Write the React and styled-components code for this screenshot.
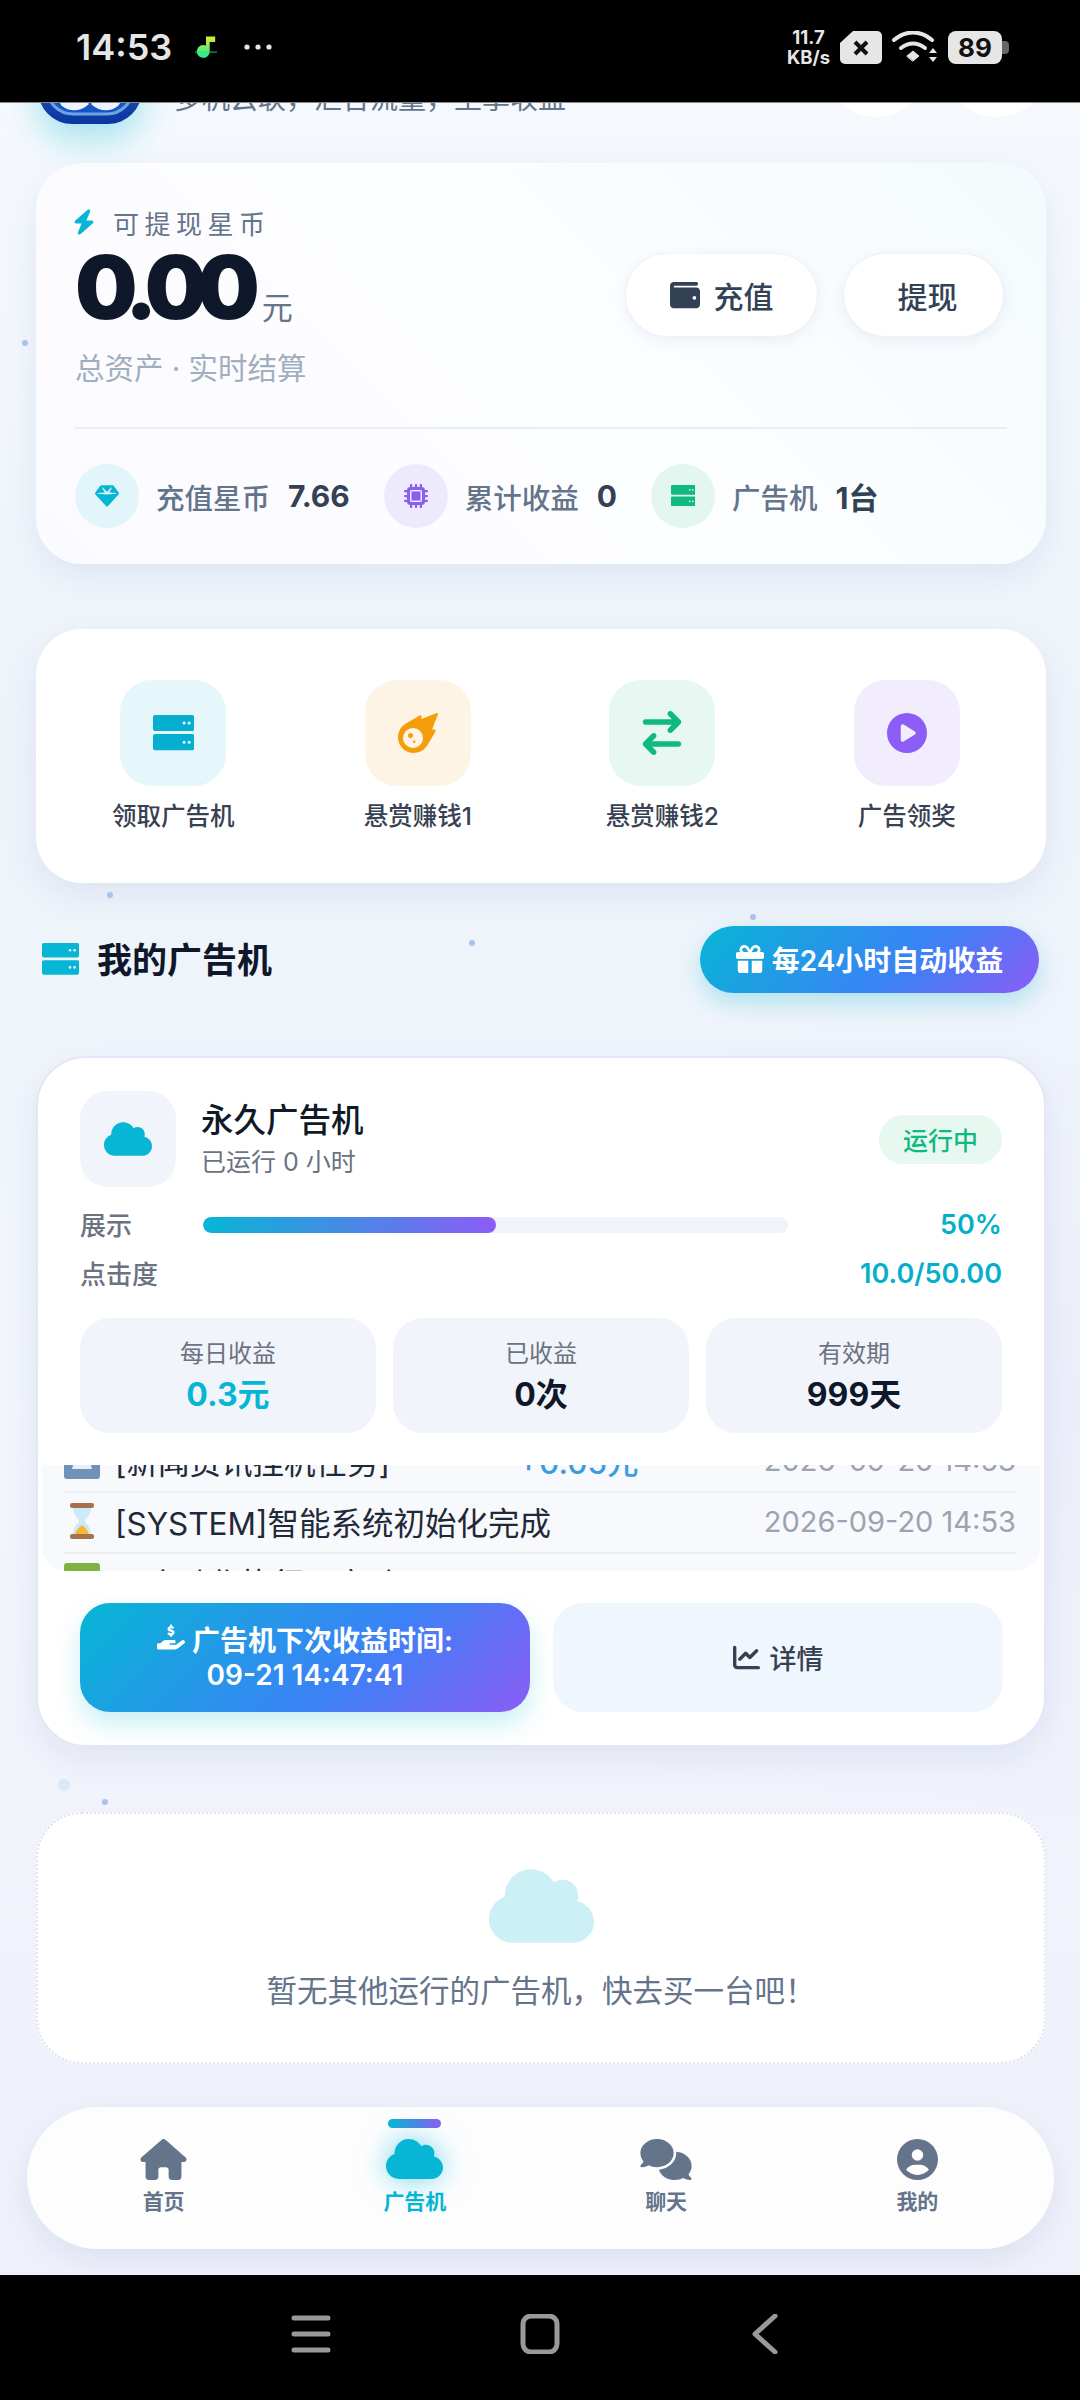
import React from 'react'
import styled, { createGlobalStyle } from 'styled-components'
import { FaCloud } from 'react-icons/fa'
import {
  FaMeteor, FaArrowRightArrowLeft, FaCirclePlay, FaBolt, FaWallet, FaGem,
  FaMicrochip, FaGift, FaHandHoldingDollar, FaChartLine, FaHouse, FaComments, FaCircleUser
} from 'react-icons/fa6'

const GRADIENT = 'linear-gradient(135deg, #06b6d4, #3b82f6 60%, #8b5cf6)'

const Global = createGlobalStyle`
  html, body { margin: 0; padding: 0; background: #000; }
  * { box-sizing: border-box; }
  body { font-family: Inter, "Noto Sans CJK SC", sans-serif; }
`

const Phone = styled.div`
  width: 1080px;
  height: 2400px;
  display: flex;
  flex-direction: column;
  background: #000;
  overflow: hidden;
`

const StatusBar = styled.div`
  height: 103px;
  flex: none;
  display: flex;
  align-items: center;
  justify-content: space-between;
  padding: 0 78px 8px 76px;
  color: #e6e6e6;
  border-bottom: 1px solid #8a8a8a;
`

const StatusGroup = styled.div`
  display: flex;
  align-items: center;
  gap: ${p => p.$gap || 10}px;
`

const Clock = styled.span`
  font-size: 36px;
  font-weight: 600;
  margin-right: -4px;
`

const Speed = styled.div`
  display: flex;
  flex-direction: column;
  align-items: center;
  font-size: 18.5px;
  font-weight: 700;
  line-height: 20px;
`

const Battery = styled.div`
  width: 54px;
  height: 33px;
  border-radius: 8px;
  background: #e6e6e6;
  color: #111;
  font-size: 26px;
  font-weight: 700;
  display: flex;
  align-items: center;
  justify-content: center;
  position: relative;
  &::after {
    content: '';
    position: absolute;
    right: -7px;
    top: 10px;
    width: 7px;
    height: 13px;
    border-radius: 0 4px 4px 0;
    background: #666;
  }
`

const Screen = styled.main`
  position: relative;
  height: 2172px;
  flex: none;
  overflow: hidden;
  padding: 0 34px 0 36px;
  background:
    radial-gradient(900px 700px at 100% 60%, #eceffa 0%, transparent 70%),
    linear-gradient(180deg, #f5f9fd 0%, #eef3fa 30%, #f2f5fc 60%, #eff1fa 100%);
`

const Dot = styled.i`
  position: absolute;
  left: ${p => p.$x}px;
  top: ${p => p.$y}px;
  width: ${p => p.$size || 6}px;
  height: ${p => p.$size || 6}px;
  border-radius: 50%;
  background: ${p => p.$size ? '#dbe7fb' : '#a9c2ec'};
`

const Header = styled.header`
  height: 60px;
  margin-top: -39px;
  display: flex;
  align-items: flex-end;
  position: relative;
`

const Logo = styled.svg`
  width: 104px;
  height: 96px;
  margin-left: 2px;
  flex: none;
  border-radius: 34px;
  box-shadow: 0 16px 34px rgba(6, 182, 212, .32);
`

const Slogan = styled.div`
  margin: 0 0 11px 32px;
  font-size: 28px;
  line-height: 28px;
  color: #64748b;
  white-space: nowrap;
`

const Round = styled.div`
  position: absolute;
  bottom: 7px;
  right: ${p => p.$right}px;
  width: 110px;
  height: 110px;
  border-radius: 50%;
  background: #fff;
`

const Card = styled.section`
  width: 1010px;
  background: #fff;
  border-radius: 46px;
  box-shadow: 0 12px 32px rgba(120, 140, 190, .14);
`

const Hero = styled(Card)`
  height: 401px;
  margin-top: 39px;
  padding: 44px 39px 0;
  background: linear-gradient(45deg, #fbfaff 0%, #fdfeff 50%, #f4fafd 100%);
`

const HeroTop = styled.div`
  height: 222px;
  display: flex;
  justify-content: space-between;
  border-bottom: 2px solid #e9edf4;
`

const Eyebrow = styled.div`
  display: flex;
  align-items: center;
  gap: 18px;
  height: 30px;
  font-size: 26px;
  letter-spacing: 5.5px;
  color: #64748b;
  svg { color: #06b6d4; width: 22px; height: 28px; margin-left: -2px; }
`

const AmountRow = styled.div`
  display: flex;
  align-items: baseline;
  gap: 12px;
  margin-top: 4px;
  height: 92px;
  line-height: 92px;
`

const Amount = styled.span`
  font-size: 88px;
  font-weight: 900;
  color: #0f172a;
  letter-spacing: -10px;
`

const Unit = styled.span`
  font-size: 31px;
  color: #64748b;
`

const HeroSub = styled.div`
  margin-top: 15px;
  font-size: 29.5px;
  line-height: 40px;
  color: #a0aec0;
`

const HeroActions = styled.div`
  display: flex;
  gap: 25px;
  margin: 46px 3px 0 0;
  align-items: flex-start;
`

const PillButton = styled.div`
  width: ${p => p.$w}px;
  height: 84px;
  padding-left: ${p => p.$inset || 0}px;
  border-radius: 42px;
  background: #fff;
  border: 1px solid #eef1f6;
  box-shadow: 0 4px 14px rgba(120, 140, 190, .12);
  display: flex;
  align-items: center;
  justify-content: center;
  gap: 14px;
  font-size: 30px;
  font-weight: 500;
  color: #334155;
`

const HeroStats = styled.div`
  display: flex;
  align-items: center;
  margin-top: 35px;
  gap: 34px;
`

const Stat = styled.div`
  display: flex;
  align-items: center;
  font-size: 28.5px;
`

const StatIcon = styled.div`
  width: 64px;
  height: 64px;
  border-radius: 50%;
  background: ${p => p.$bg};
  color: ${p => p.$color};
  display: flex;
  align-items: center;
  justify-content: center;
  margin-right: 17px;
  font-size: 24px;
`

const StatLabel = styled.span`
  color: #64748b;
  font-weight: 500;
  margin-right: 18px;
`

const StatValue = styled.span`
  color: #334155;
  font-size: 30px;
  font-weight: 700;
`

const Actions = styled(Card)`
  height: 254px;
  margin-top: 65px;
  padding: 51px 17px 0 15px;
  display: grid;
  grid-template-columns: repeat(4, 1fr);
`

const ActionItem = styled.div`
  display: flex;
  flex-direction: column;
  align-items: center;
  font-size: 24.5px;
  font-weight: 500;
  color: #374151;
`

const ActionTile = styled.div`
  width: 106px;
  height: 106px;
  border-radius: 32px;
  background: ${p => p.$bg};
  color: ${p => p.$color};
  display: flex;
  align-items: center;
  justify-content: center;
  font-size: ${p => p.$size || 40}px;
  margin-bottom: 11px;
`

const SectionHead = styled.div`
  width: 1003px;
  margin-top: 43px;
  height: 66px;
  display: flex;
  align-items: center;
  justify-content: space-between;
  padding-left: 6px;
`

const SectionTitle = styled.h2`
  margin: 0 0 3px;
  display: flex;
  align-items: center;
  gap: 18px;
  font-size: 35px;
  font-weight: 700;
  color: #0f172a;
  svg { color: #06b6d4; font-size: 36px; margin-top: 3px; }
`

const AutoPill = styled.div`
  width: 339px;
  height: 67px;
  border-radius: 34px;
  background: ${GRADIENT};
  box-shadow: 0 10px 24px rgba(6, 182, 212, .28);
  color: #fff;
  font-size: 28px;
  font-weight: 600;
  display: flex;
  align-items: center;
  justify-content: center;
  gap: 8px;
`

const Machine = styled(Card)`
  height: 691px;
  margin-top: 64px;
  padding: 33px 42px 0;
  border: 2px solid #e5e6f6;
  border-radius: 50px;
  position: relative;
`

const MachineHead = styled.div`
  display: flex;
  align-items: center;
  height: 96px;
`

const MachineIcon = styled.div`
  width: 96px;
  height: 96px;
  border-radius: 28px;
  background: #f1f4fb;
  color: #06b6d4;
  font-size: 48px;
  display: flex;
  align-items: center;
  justify-content: center;
  margin-right: 25px;
`

const MachineName = styled.div`
  font-size: 32.5px;
  font-weight: 500;
  line-height: 42px;
  color: #111827;
`

const MachineSub = styled.div`
  font-size: 25px;
  line-height: 34px;
  margin-top: 3px;
  color: #6b7280;
`

const Badge = styled.div`
  margin-left: auto;
  width: 123px;
  height: 49px;
  border-radius: 25px;
  background: #e7f8f1;
  color: #10b981;
  font-size: 25px;
  font-weight: 500;
  display: flex;
  align-items: center;
  justify-content: center;
`

const Meters = styled.div`
  margin-top: 13px;
`

const MeterRow = styled.div`
  height: 49px;
  display: flex;
  align-items: center;
  font-size: 26px;
  color: #6b7280;
  font-weight: 500;
`

const MeterLabel = styled.span`
  width: 123px;
  flex: none;
  margin-top: -3px;
`

const Track = styled.div`
  width: 585px;
  height: 16px;
  border-radius: 8px;
  background: #f1f3fa;
  overflow: hidden;
`

const TrackFill = styled.div`
  height: 100%;
  border-radius: 8px;
  background: linear-gradient(90deg, #06b6d4, #8b5cf6);
`

const MeterValue = styled.span`
  margin-left: auto;
  font-size: 27px;
  font-weight: 600;
  color: #06afc9;
`

const StatGrid = styled.div`
  display: grid;
  grid-template-columns: repeat(3, 1fr);
  gap: 17px;
  margin-top: 20px;
`

const StatTile = styled.div`
  height: 115px;
  border-radius: 30px;
  background: #f1f4fb;
  display: flex;
  flex-direction: column;
  align-items: center;
  justify-content: center;
  gap: 4px;
`

const TileLabel = styled.span`
  font-size: 24px;
  line-height: 34px;
  color: #6b7280;
`

const TileValue = styled.span`
  font-size: 32px;
  line-height: 40px;
  font-weight: 700;
  color: ${p => p.$accent ? '#06b6d4' : '#0f172a'};
`

const Log = styled.div`
  height: 106px;
  margin: 32px -38px 0;
  padding: 0 24px 0 22px;
  background: #f8f9fd;
  border-radius: 0 0 24px 24px;
  overflow: hidden;
`

const LogInner = styled.div`
  margin-top: -33px;
`

const LogRow = styled.div`
  height: 61px;
  padding-bottom: 3px;
  display: flex;
  align-items: center;
  border-bottom: 2px solid #eceef5;
  font-size: 31.5px;
  color: #1f2937;
  white-space: nowrap;
`

const LogMark = styled.svg`
  width: 36px;
  height: 38px;
  margin-right: 15px;
  flex: none;
`

const LogText = styled.span`
  width: 403px;
  flex: none;
`

const LogDelta = styled.span`
  color: #3b9de0;
  font-weight: 500;
`

const LogTime = styled.span`
  margin-left: auto;
  font-size: 29px;
  color: #9ca3af;
`

const Buttons = styled.div`
  display: grid;
  grid-template-columns: 450px 450px;
  gap: 23px;
  margin-top: 32px;
`

const PrimaryButton = styled.div`
  height: 109px;
  border-radius: 30px;
  background: ${GRADIENT};
  box-shadow: 0 12px 26px rgba(6, 182, 212, .22);
  color: #fff;
  font-size: 28px;
  font-weight: 600;
  line-height: 34px;
  display: flex;
  flex-direction: column;
  align-items: center;
  justify-content: center;
`

const GhostButton = styled.div`
  height: 109px;
  border-radius: 30px;
  background: #eff6fe;
  color: #374151;
  font-size: 27px;
  font-weight: 500;
  display: flex;
  align-items: center;
  justify-content: center;
  gap: 10px;
`

const Empty = styled.section`
  width: 1010px;
  height: 252px;
  margin-top: 65px;
  border-radius: 46px;
  background: #fff;
  border: 2px dotted #dfe4ef;
  display: flex;
  flex-direction: column;
  align-items: center;
  padding-top: 50px;
  color: #cdeff6;
  svg { font-size: 105px; height: 84px; }
`

const EmptyText = styled.div`
  margin-top: 23px;
  font-size: 30.5px;
  line-height: 40px;
  color: #64748b;
`

const TabBar = styled.nav`
  position: absolute;
  left: 27px;
  top: 2004px;
  width: 1027px;
  height: 142px;
  padding: 0 11px;
  border-radius: 71px;
  background: #fdfdfe;
  box-shadow: 0 10px 28px rgba(120, 140, 190, .16);
  display: grid;
  grid-template-columns: repeat(4, 1fr);
`

const Tab = styled.div`
  position: relative;
  display: flex;
  flex-direction: column;
  align-items: center;
  padding-top: 32px;
  font-size: 21px;
  font-weight: 600;
  color: ${p => p.$active ? '#06b6d4' : '#64748b'};
  svg {
    width: ${p => p.$w}px;
    height: ${p => p.$active ? 46 : 41}px;
    margin: ${p => p.$active ? '-3px 0 -2px' : '0'};
    ${p => p.$active && 'filter: drop-shadow(0 0 14px rgba(6, 182, 212, .55));'}
  }
`

const TabLabel = styled.span`
  margin-top: 7px;
  line-height: 30px;
`

const TabMark = styled.i`
  position: absolute;
  top: 12px;
  left: 50%;
  margin-left: -27px;
  width: 53px;
  height: 9px;
  border-radius: 5px;
  background: linear-gradient(90deg, #06b6d4, #8b5cf6);
`

const NavBar = styled.div`
  flex: 1;
  background: #000;
  display: flex;
  align-items: flex-start;
  padding-top: 39px;
  padding-left: 291px;
  gap: 189px;
`

const NavIcon = styled.svg`
  width: 40px;
  height: 40px;
  fill: none;
  stroke: #999;
  stroke-width: 5;
  stroke-linecap: round;
  stroke-linejoin: round;
`

// two stacked racks with a pair of small lights, drawn since the packs have no such server glyph
const ServerIcon = () => (
  <svg width="1.03em" height=".88em" viewBox="0 0 41 35">
    <path fill="currentColor" fillRule="evenodd" d="M2 0h37a2 2 0 0 1 2 2v12a2 2 0 0 1-2 2H2a2 2 0 0 1-2-2V2a2 2 0 0 1 2-2zm29 6.5a1.5 1.5 0 0 0 0 3 1.5 1.5 0 0 0 0-3zm5 0a1.5 1.5 0 0 0 0 3 1.5 1.5 0 0 0 0-3zM2 19h37a2 2 0 0 1 2 2v12a2 2 0 0 1-2 2H2a2 2 0 0 1-2-2V21a2 2 0 0 1 2-2zm29 6.5a1.5 1.5 0 0 0 0 3 1.5 1.5 0 0 0 0-3zm5 0a1.5 1.5 0 0 0 0 3 1.5 1.5 0 0 0 0-3z" />
  </svg>
)

const dots = [
  [22, 237], [107, 789], [469, 837], [750, 811], [102, 1696]
]

const tabs = [
  { label: '首页', Icon: FaHouse, w: 47 },
  { label: '广告机', Icon: FaCloud, w: 57, active: true },
  { label: '聊天', Icon: FaComments, w: 52 },
  { label: '我的', Icon: FaCircleUser, w: 41 }
]

const actions = [
  { label: '领取广告机', Icon: ServerIcon, bg: '#e6f7fc', color: '#06afcf' },
  { label: '悬赏赚钱1', Icon: FaMeteor, bg: '#fef4e6', color: '#f59e0b' },
  { label: '悬赏赚钱2', Icon: FaArrowRightArrowLeft, bg: '#e7f7f1', color: '#10b981', size: 44 },
  { label: '广告领奖', Icon: FaCirclePlay, bg: '#f1edfd', color: '#8b5cf6' }
]

const App = () => (
  <Phone>
    <Global />
    <StatusBar>
      <StatusGroup $gap={27}>
        <Clock>14:53</Clock>
        <svg width="22" height="25" viewBox="0 0 24 26">
          <defs>
            <linearGradient id="note" x1="0" y1="0" x2="0" y2="1">
              <stop offset="0" stopColor="#d8ef2e" />
              <stop offset="1" stopColor="#20e8a0" />
            </linearGradient>
          </defs>
          <path d="M12 1h10v6h-6v10a7 7 0 1 1-4-6z" fill="url(#note)" />
          <path d="M0 18h24" stroke="#20e070" strokeWidth="1" />
        </svg>
        <svg width="28" height="6" viewBox="0 0 28 6" fill="#e6e6e6">
          <circle cx="3" cy="3" r="2.6" /><circle cx="14" cy="3" r="2.6" /><circle cx="25" cy="3" r="2.6" />
        </svg>
      </StatusGroup>
      <StatusGroup>
        <Speed><span>11.7</span><span>KB/s</span></Speed>
        <svg width="42" height="33" viewBox="0 0 42 33">
          <path d="M13 0h24a5 5 0 0 1 5 5v23a5 5 0 0 1-5 5H5a5 5 0 0 1-5-5V12z" fill="#e6e6e6" />
          <path d="M15 11l12 12M27 11L15 23" stroke="#111" strokeWidth="4" />
        </svg>
        <svg width="46" height="33" viewBox="0 0 46 33" fill="none" stroke="#e6e6e6" strokeLinecap="round">
          <path d="M2 9C14-1 28-1 40 9" strokeWidth="4" />
          <path d="M9 17c8-6 16-6 24 0" strokeWidth="4" />
          <path d="M15 25l6-5 6 5-6 5z" fill="#e6e6e6" strokeWidth="1" />
          <path d="M37 22l4-5 4 5zM37 26l4 5 4-5z" fill="#e6e6e6" stroke="none" />
        </svg>
        <Battery>89</Battery>
      </StatusGroup>
    </StatusBar>

    <Screen>
      {dots.map(([x, y]) => <Dot key={x} $x={x} $y={y} />)}
      <Dot $x={58} $y={1676} $size={12} />

      <Header>
        <Logo viewBox="0 0 104 96">
          <defs>
            <linearGradient id="logo" x1="0" y1="0" x2="0" y2="1">
              <stop offset="0" stopColor="#2f78dc" />
              <stop offset="1" stopColor="#0a36a0" />
            </linearGradient>
          </defs>
          <rect width="104" height="96" fill="url(#logo)" />
          <rect x="9" y="8" width="86" height="78" rx="26" fill="#1556c4" stroke="#6fa3e4" strokeWidth="3" />
          <path d="M21 66c12-4 22 0 30 10-8 8-20 8-27 2-3-3-4-8-3-12zM83 66c-12-4-22 0-30 10 8 8 20 8 27 2 3-3 4-8 3-12z" fill="#eef4fd" />
        </Logo>
        <Slogan>多机云联，汇合流量，坐享收益</Slogan>
        <Round $right={115} />
        <Round $right={-6} />
      </Header>

      <Hero>
        <HeroTop>
          <div>
            <Eyebrow><FaBolt />可提现星币</Eyebrow>
            <AmountRow><Amount>0.00</Amount><Unit>元</Unit></AmountRow>
            <HeroSub>总资产 · 实时结算</HeroSub>
          </div>
          <HeroActions>
            <PillButton $w={193}><FaWallet />充值</PillButton>
            <PillButton $w={161} $inset={8}>提现</PillButton>
          </HeroActions>
        </HeroTop>
        <HeroStats>
          <Stat>
            <StatIcon $bg="#e2f5fa" $color="#06b6d4"><FaGem /></StatIcon>
            <StatLabel>充值星币</StatLabel><StatValue>7.66</StatValue>
          </Stat>
          <Stat>
            <StatIcon $bg="#eeeafc" $color="#8b5cf6"><FaMicrochip /></StatIcon>
            <StatLabel>累计收益</StatLabel><StatValue>0</StatValue>
          </Stat>
          <Stat>
            <StatIcon $bg="#e4f6f0" $color="#10b981"><ServerIcon /></StatIcon>
            <StatLabel>广告机</StatLabel><StatValue>1台</StatValue>
          </Stat>
        </HeroStats>
      </Hero>

      <Actions>
        {actions.map(({ label, Icon, bg, color, size }) => (
          <ActionItem key={label}>
            <ActionTile $bg={bg} $color={color} $size={size}><Icon /></ActionTile>
            {label}
          </ActionItem>
        ))}
      </Actions>

      <SectionHead>
        <SectionTitle><ServerIcon />我的广告机</SectionTitle>
        <AutoPill><FaGift />每24小时自动收益</AutoPill>
      </SectionHead>

      <Machine>
        <MachineHead>
          <MachineIcon><FaCloud /></MachineIcon>
          <div>
            <MachineName>永久广告机</MachineName>
            <MachineSub>已运行 0 小时</MachineSub>
          </div>
          <Badge>运行中</Badge>
        </MachineHead>
        <Meters>
          <MeterRow>
            <MeterLabel>展示</MeterLabel>
            <Track><TrackFill style={{ width: '50%' }} /></Track>
            <MeterValue>50%</MeterValue>
          </MeterRow>
          <MeterRow>
            <MeterLabel>点击度</MeterLabel>
            <MeterValue>10.0/50.00</MeterValue>
          </MeterRow>
        </Meters>
        <StatGrid>
          <StatTile><TileLabel>每日收益</TileLabel><TileValue $accent>0.3元</TileValue></StatTile>
          <StatTile><TileLabel>已收益</TileLabel><TileValue>0次</TileValue></StatTile>
          <StatTile><TileLabel>有效期</TileLabel><TileValue>999天</TileValue></StatTile>
        </StatGrid>
        <Log>
          <LogInner>
            <LogRow>
              <LogMark viewBox="0 0 36 38">
                <rect width="36" height="38" rx="3" fill="#6f93b8" />
                <path d="M8 28l5-18 5 10 5-10 5 18z" fill="#e8eef5" />
              </LogMark>
              <LogText>[新闻资讯挂机任务]</LogText>
              <LogDelta>+0.05元</LogDelta>
              <LogTime>2026-09-20 14:53</LogTime>
            </LogRow>
            <LogRow>
              <LogMark viewBox="0 0 36 38">
                <path d="M9 5h18c0 10-6 11-6 14s6 4 6 14H9c0-10 6-11 6-14S9 15 9 5z" fill="#cdeaf8" />
                <path d="M11 33c1-6 5-8 7-10 2 2 6 4 7 10z" fill="#f5b93a" />
                <rect x="6" y="1" width="24" height="5" rx="2" fill="#a8714a" />
                <rect x="6" y="32" width="24" height="5" rx="2" fill="#a8714a" />
              </LogMark>
              <LogText>[SYSTEM]智能系统初始化完成</LogText>
              <LogTime>2026-09-20 14:53</LogTime>
            </LogRow>
            <LogRow>
              <LogMark viewBox="0 0 36 38">
                <rect width="36" height="38" rx="3" fill="#7cb342" />
              </LogMark>
              <LogText>一个动作执行已启动</LogText>
            </LogRow>
          </LogInner>
        </Log>
        <Buttons>
          <PrimaryButton>
            <span><FaHandHoldingDollar /> 广告机下次收益时间:</span>
            <span>09-21 14:47:41</span>
          </PrimaryButton>
          <GhostButton><FaChartLine />详情</GhostButton>
        </Buttons>
      </Machine>

      <Empty>
        <FaCloud />
        <EmptyText>暂无其他运行的广告机，快去买一台吧！</EmptyText>
      </Empty>

      <TabBar>
        {tabs.map(({ label, Icon, w, active }) => (
          <Tab key={label} $active={active} $w={w}>
            {active && <TabMark />}
            <Icon />
            <TabLabel>{label}</TabLabel>
          </Tab>
        ))}
      </TabBar>
    </Screen>

    <NavBar>
      <NavIcon viewBox="0 0 40 40">
        <path d="M3 4h34M3 20h34M3 36h34" />
      </NavIcon>
      <NavIcon viewBox="0 0 40 40">
        <rect x="3" y="2" width="34" height="36" rx="8" />
      </NavIcon>
      <NavIcon viewBox="0 0 40 40">
        <path d="M26 2L6 20l20 18" />
      </NavIcon>
    </NavBar>
  </Phone>
)

export default App
